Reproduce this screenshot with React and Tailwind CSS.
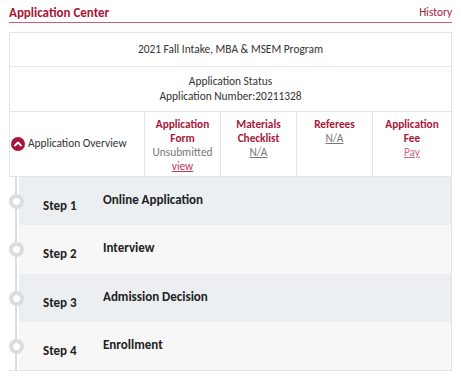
import React from 'react';

const steps = [
  { n: 1, title: 'Online Application', h: 'h-[48px]' },
  { n: 2, title: 'Interview', h: 'h-[49px]' },
  { n: 3, title: 'Admission Decision', h: 'h-[48px]' },
  { n: 4, title: 'Enrollment', h: 'h-[48px]' },
];

// ── Overview column cell ──────────────────────────────────────────────────────
function OverviewCell({ title, status, link, linkClass }) {
  return (
    <div className="border-l border-[#e6e6e6] flex flex-col items-center pt-[5px] text-center leading-[14px]">
      {title.map((t) => (
        <span key={t} className="font-bold text-[#a8173a] text-[11.3px]">{t}</span>
      ))}
      {status && <span className="text-[#777]">{status}</span>}
      {link && <span className={`underline ${linkClass}`}>{link}</span>}
    </div>
  );
}

// ── Timeline step ─────────────────────────────────────────────────────────────
function StepRow({ step, odd }) {
  return (
    <div className={`flex ${step.h}`}>
      <div className="relative w-[10px] shrink-0">
        <div className="absolute left-[6px] top-0 bottom-0 w-[2px] bg-[#dcdcdc]" />
        <div className="absolute left-0 top-[17px] w-[15px] h-[15px] rounded-full bg-[#dcdcdc] flex items-center justify-center">
          <div className="w-[7px] h-[7px] rounded-full bg-white" />
        </div>
      </div>
      <div className={`flex-1 flex items-start font-bold text-[13px] text-[#222] ${odd ? 'bg-[#eceff2]' : 'bg-[#f7f7f7]'}`}>
        <span className="w-[60px] pl-[24px] pt-[19px] box-content">Step {step.n}</span>
        <span className="pt-[13px]">{step.title}</span>
      </div>
    </div>
  );
}

export default function App() {
  return (
    <div className="w-[461px] h-[384px] bg-white px-[9px] pt-[3px] text-[11.4px] text-[#333] font-['Carlito','Calibri','Liberation_Sans_Narrow',sans-serif]">
      {/* ── Header ── */}
      <div className="flex items-center justify-between h-[20px] border-b border-[#d65a72]">
        <span className="text-[13px] font-bold text-[#a8173a]">Application Center</span>
        <span className="text-[11.3px] text-[#a8173a]">History</span>
      </div>

      {/* ── Application box ── */}
      <div className="mt-[9px] border-r border-b border-[#e3e3e3]">
        <div className="border-l border-t border-[#e6e6e6]">
          <div className="h-[34px] flex items-center justify-center border-b border-[#e6e6e6]">
            2021 Fall Intake, MBA &amp; MSEM Program
          </div>
          <div className="h-[45px] flex flex-col items-center justify-center leading-[15px] border-b border-[#e6e6e6]">
            <span>Application Status</span>
            <span>Application Number:20211328</span>
          </div>
          <div className="h-[64px] grid grid-cols-[134px_76px_76px_76px_1fr]">
            <div className="flex items-center gap-[3px] pl-[1px] whitespace-nowrap">
              <span className="w-[14px] h-[14px] shrink-0 rounded-full bg-[#a8173a] flex items-center justify-center">
                <svg width="8" height="6" viewBox="0 0 8 6">
                  <path d="M1 4.5 L4 1.5 L7 4.5" fill="none" stroke="white" strokeWidth="1.8" strokeLinecap="round" strokeLinejoin="round" />
                </svg>
              </span>
              <span>Application Overview</span>
            </div>
            <OverviewCell title={['Application', 'Form']} status="Unsubmitted" link="view" linkClass="text-[#c0395a]" />
            <OverviewCell title={['Materials', 'Checklist']} link="N/A" linkClass="text-[#777]" />
            <OverviewCell title={['Referees']} link="N/A" linkClass="text-[#777]" />
            <OverviewCell title={['Application', 'Fee']} link="Pay" linkClass="text-[#d26a85]" />
          </div>
        </div>

        {/* ── Steps ── */}
        <div className="border-t border-[#e6e6e6]">
          {steps.map((s, i) => (
            <StepRow key={s.n} step={s} odd={i % 2 === 0} />
          ))}
        </div>
      </div>
    </div>
  );
}
